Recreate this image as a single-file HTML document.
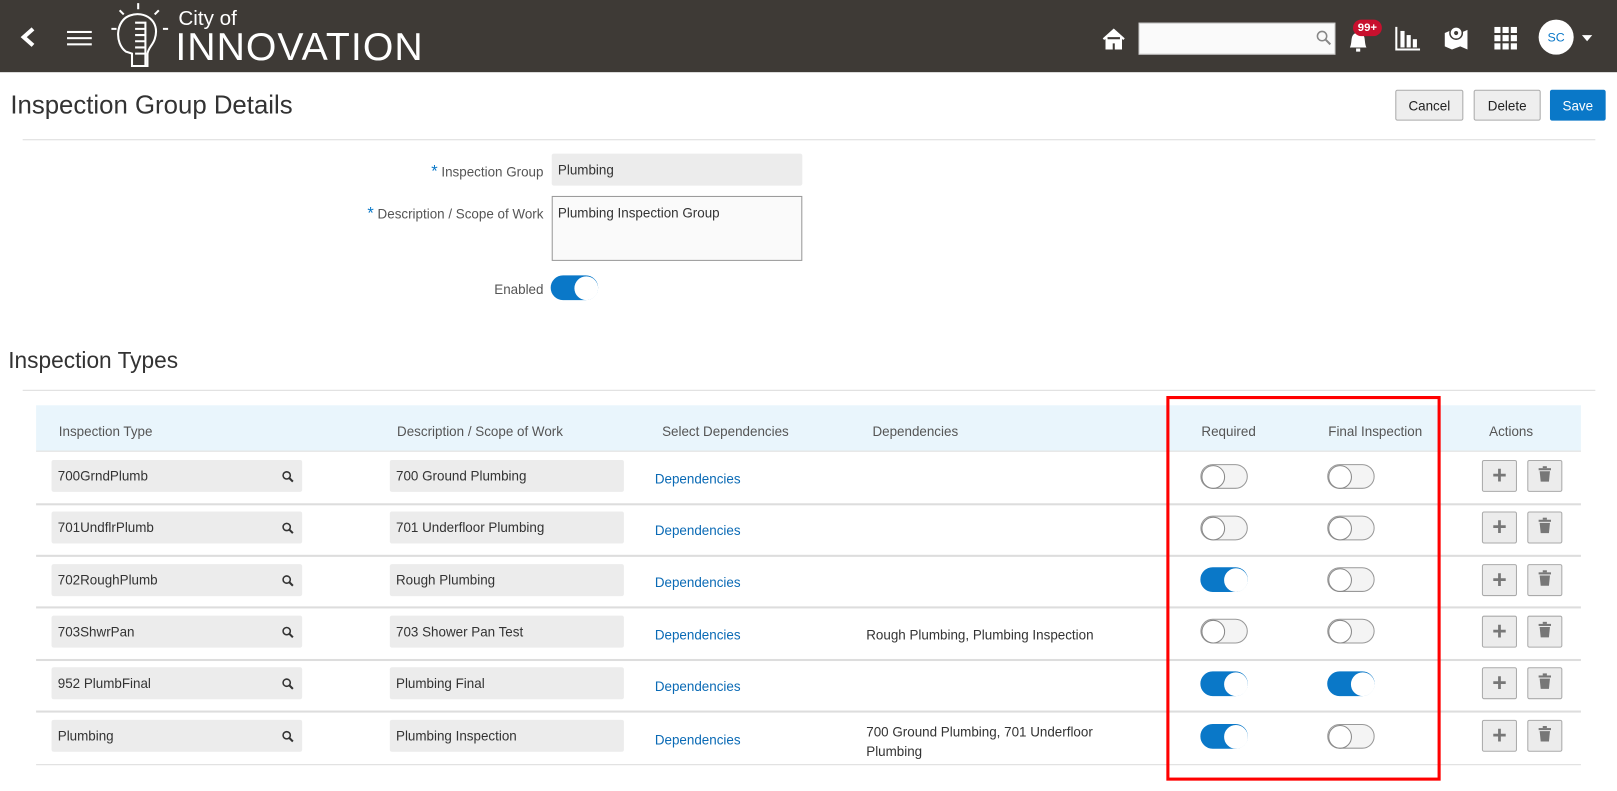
<!DOCTYPE html>
<html><head><meta charset="utf-8"><style>
*{box-sizing:border-box;margin:0;padding:0}
html,body{width:1617px;height:791px;overflow:hidden;background:#fff}
#w{position:absolute;left:0;top:0;width:1568px;height:767px;transform:scale(1.03125);transform-origin:0 0;font-family:"Liberation Sans",sans-serif;color:#333;font-size:13px}
.abs{position:absolute}
.hdr{left:0;top:0;width:1568px;height:70px;background:#3e3a36}
.btn{position:absolute;top:87px;height:30px;border:1px solid #aaa;background:#eee;border-radius:2px;font-size:13px;display:flex;align-items:center;justify-content:center;color:#222}
.inp{position:absolute;background:#ececec;border-radius:2px;font-size:13px;color:#333;padding-left:6px;display:flex;align-items:center}
.tog{position:absolute;width:46px;height:24px;border-radius:12px;border:1px solid #999;background:#f4f4f4}
.tog::after{content:"";position:absolute;left:0;top:0;width:21px;height:21px;border-radius:50%;background:#fff;border:1px solid #888}
.tog.on{background:#0a78c8;border-color:#0a78c8}
.tog.on::after{left:22px;border-color:#fff}
.line{position:absolute;height:1px;background:#ddd}
.lnk{position:absolute;color:#0a6ab5;font-size:13px}
.ab{position:absolute;width:34px;height:31px;border:1px solid #aaa;background:#ececec;border-radius:2px;color:#777;font-size:24px;font-weight:bold;display:flex;align-items:center;justify-content:center}
.th{position:absolute;top:411px;font-size:13px;color:#555}
</style></head><body><div id="w">
<div class="abs hdr"></div>
<svg class="abs" style="left:18px;top:25px" width="20" height="22"><path d="M14 3 L5 11 L14 19" stroke="#fff" stroke-width="4" fill="none"/></svg>
<div class="abs" style="left:65px;top:30px;width:24px;height:2px;background:#fff;box-shadow:0 6px #fff,0 12px #fff"></div>
<svg class="abs" style="left:106px;top:2px" width="60" height="66" stroke="#fff" fill="none" stroke-width="2"><path d="M16 48 C5 40 6 18 20 13 C34 8 50 18 44 36 C42 42 38 44 37 50 L37 62 L22 62 L22 50 Z"/><path d="M25 20 h10 v42 M25 26h10M25 32h10M25 38h10M25 44h10M25 50h10"/><path d="M10 8 l4 4 M28 1 v6 M48 8 l-4 4 M2 26 h5 M52 26 h5"/></svg>
<div class="abs" style="left:173px;top:7px;color:#fff;font-size:20px">City of</div>
<div class="abs" style="left:170px;top:26px;color:#fff;font-size:38px;letter-spacing:1px;line-height:40px">INNOVATION</div>
<svg class="abs" style="left:1068px;top:27px" width="24" height="22"><path d="M2 11 L12 2 L22 11 M5 9 V20 H10 V14 H14 V20 H19 V9" fill="#fff" stroke="#fff" stroke-width="2"/></svg>
<div class="abs" style="left:1104px;top:22px;width:191px;height:31px;background:#fafafa;border:1px solid #ccc"></div>
<svg class="abs" style="left:1276px;top:29px" width="16" height="16"><circle cx="6" cy="6" r="4.5" stroke="#888" stroke-width="1.5" fill="none"/><path d="M9.5 9.5 L14 14" stroke="#888" stroke-width="2"/></svg>
<svg class="abs" style="left:1305px;top:28px" width="24" height="24"><path d="M4 18 C6 14 5 8 7 6 C9 3 15 3 17 6 C19 8 18 14 20 18 Z M10 19 h4 v3 h-4z" fill="#fff"/></svg>
<div class="abs" style="left:1312px;top:19px;width:28px;height:16px;background:#c8102e;border-radius:8px;color:#fff;font-size:11px;font-weight:bold;text-align:center;line-height:16px">99+</div>
<svg class="abs" style="left:1352px;top:24px" width="26" height="26"><path d="M2 2 V24 H25" stroke="#fff" stroke-width="2" fill="none"/><rect x="6" y="6" width="4" height="16" fill="#fff"/><rect x="12" y="10" width="4" height="12" fill="#fff"/><rect x="18" y="14" width="4" height="8" fill="#fff"/></svg>
<svg class="abs" style="left:1400px;top:24px" width="24" height="26"><path d="M1 8 L8 5 L16 8 L23 5 V24 L16 21 L8 24 L1 21 Z" fill="#fff"/><circle cx="12" cy="8" r="6" fill="#fff" stroke="#3e3a36" stroke-width="1.5"/><circle cx="12" cy="8" r="2" fill="#3e3a36"/></svg>
<svg class="abs" style="left:1449px;top:26px" width="22" height="22" fill="#fff"><rect x="0" y="0" width="6" height="6"/><rect x="8" y="0" width="6" height="6"/><rect x="16" y="0" width="6" height="6"/><rect x="0" y="8" width="6" height="6"/><rect x="8" y="8" width="6" height="6"/><rect x="16" y="8" width="6" height="6"/><rect x="0" y="16" width="6" height="6"/><rect x="8" y="16" width="6" height="6"/><rect x="16" y="16" width="6" height="6"/></svg>
<div class="abs" style="left:1492px;top:19px;width:34px;height:34px;border-radius:50%;background:#fff;color:#0a78c8;font-size:12px;text-align:center;line-height:34px">SC</div>
<div class="abs" style="left:1534px;top:34px;border-left:5px solid transparent;border-right:5px solid transparent;border-top:6px solid #fff"></div>

<div class="abs" style="left:10px;top:88px;font-size:25px;color:#333">Inspection Group Details</div>
<div class="btn" style="left:1353px;width:66px">Cancel</div>
<div class="btn" style="left:1429px;width:65px">Delete</div>
<div class="btn" style="left:1503px;width:54px;background:#0a78c8;border-color:#0a78c8;color:#fff">Save</div>
<div class="line" style="left:22px;top:135px;width:1525px"></div>

<div class="abs" style="left:300px;top:158px;width:227px;text-align:right;font-size:13px;color:#555"><span style="color:#0a78c8;font-size:16px">*</span> Inspection Group</div>
<div class="inp" style="left:535px;top:149px;width:243px;height:31px">Plumbing</div>
<div class="abs" style="left:300px;top:199px;width:227px;text-align:right;font-size:13px;color:#555"><span style="color:#0a78c8;font-size:16px">*</span> Description / Scope of Work</div>
<div class="abs" style="left:535px;top:190px;width:243px;height:63px;border:1px solid #999;background:#fafafa;padding:8px 5px;font-size:13px">Plumbing Inspection Group</div>
<div class="abs" style="left:300px;top:273px;width:227px;text-align:right;font-size:13px;color:#555">Enabled</div>
<div class="tog on" style="left:534px;top:267px"></div>

<div class="abs" style="left:8px;top:337px;font-size:22px;color:#333">Inspection Types</div>
<div class="line" style="left:22px;top:378px;width:1525px"></div>

<div class="abs" style="left:35px;top:393px;width:1498px;height:44px;background:#e9f5fc"></div>
<div class="th" style="left:57px">Inspection Type</div>
<div class="th" style="left:385px">Description / Scope of Work</div>
<div class="th" style="left:642px">Select Dependencies</div>
<div class="th" style="left:846px">Dependencies</div>
<div class="th" style="left:1165px">Required</div>
<div class="th" style="left:1288px">Final Inspection</div>
<div class="th" style="left:1444px">Actions</div>

<div class="line" style="left:35px;top:437px;width:1498px"></div>
<div class="line" style="left:35px;top:488px;width:1498px;height:2px"></div>
<div class="line" style="left:35px;top:538px;width:1498px;height:2px"></div>
<div class="line" style="left:35px;top:588px;width:1498px;height:2px"></div>
<div class="line" style="left:35px;top:639px;width:1498px;height:2px"></div>
<div class="line" style="left:35px;top:689px;width:1498px;height:2px"></div>
<div class="line" style="left:35px;top:741px;width:1498px"></div>

<div class="inp" style="left:50px;top:446px;width:243px;height:31px">700GrndPlumb</div>
<div class="inp" style="left:378px;top:446px;width:227px;height:31px">700 Ground Plumbing</div>
<div class="lnk" style="left:635px;top:457px">Dependencies</div>
<div class="tog" style="left:1164px;top:450px"></div><div class="tog" style="left:1287px;top:450px"></div>

<div class="inp" style="left:50px;top:496px;width:243px;height:31px">701UndflrPlumb</div>
<div class="inp" style="left:378px;top:496px;width:227px;height:31px">701 Underfloor Plumbing</div>
<div class="lnk" style="left:635px;top:507px">Dependencies</div>
<div class="tog" style="left:1164px;top:500px"></div><div class="tog" style="left:1287px;top:500px"></div>

<div class="inp" style="left:50px;top:547px;width:243px;height:31px">702RoughPlumb</div>
<div class="inp" style="left:378px;top:547px;width:227px;height:31px">Rough Plumbing</div>
<div class="lnk" style="left:635px;top:557px">Dependencies</div>
<div class="tog on" style="left:1164px;top:550px"></div><div class="tog" style="left:1287px;top:550px"></div>

<div class="inp" style="left:50px;top:597px;width:243px;height:31px">703ShwrPan</div>
<div class="inp" style="left:378px;top:597px;width:227px;height:31px">703 Shower Pan Test</div>
<div class="lnk" style="left:635px;top:608px">Dependencies</div>
<div class="abs" style="left:840px;top:608px">Rough Plumbing, Plumbing Inspection</div>
<div class="tog" style="left:1164px;top:600px"></div><div class="tog" style="left:1287px;top:600px"></div>

<div class="inp" style="left:50px;top:647px;width:243px;height:31px">952 PlumbFinal</div>
<div class="inp" style="left:378px;top:647px;width:227px;height:31px">Plumbing Final</div>
<div class="lnk" style="left:635px;top:658px">Dependencies</div>
<div class="tog on" style="left:1164px;top:651px"></div><div class="tog on" style="left:1287px;top:651px"></div>

<div class="inp" style="left:50px;top:698px;width:243px;height:31px">Plumbing</div>
<div class="inp" style="left:378px;top:698px;width:227px;height:31px">Plumbing Inspection</div>
<div class="lnk" style="left:635px;top:710px">Dependencies</div>
<div class="abs" style="left:840px;top:700px;line-height:19px">700 Ground Plumbing, 701 Underfloor<br>Plumbing</div>
<div class="tog on" style="left:1164px;top:702px"></div><div class="tog" style="left:1287px;top:702px"></div>

<svg class="abs" style="left:272px;top:455px" width="16" height="270"><g stroke="#333" fill="none"><g id="m"><circle cx="6" cy="6" r="3.5" stroke-width="1.5"/><path d="M8.5 8.5 L12 12" stroke-width="2"/></g><use href="#m" y="50"/><use href="#m" y="101"/><use href="#m" y="151"/><use href="#m" y="201"/><use href="#m" y="252"/></g></svg>

<div class="ab" style="left:1437px;top:446px">+</div><div class="ab" style="left:1481px;top:446px"></div>
<div class="ab" style="left:1437px;top:496px">+</div><div class="ab" style="left:1481px;top:496px"></div>
<div class="ab" style="left:1437px;top:547px">+</div><div class="ab" style="left:1481px;top:547px"></div>
<div class="ab" style="left:1437px;top:597px">+</div><div class="ab" style="left:1481px;top:597px"></div>
<div class="ab" style="left:1437px;top:647px">+</div><div class="ab" style="left:1481px;top:647px"></div>
<div class="ab" style="left:1437px;top:698px">+</div><div class="ab" style="left:1481px;top:698px"></div>
<svg class="abs" style="left:1491px;top:452px" width="14" height="270" fill="#777"><g id="t"><rect x="1" y="2" width="12" height="2"/><rect x="5" y="0" width="4" height="2"/><path d="M2 5 H12 L11 15 H3 Z"/></g><use href="#t" y="50"/><use href="#t" y="101"/><use href="#t" y="151"/><use href="#t" y="201"/><use href="#t" y="252"/></svg>

<div class="abs" style="left:1131px;top:384px;width:266px;height:373px;border:3px solid #f00"></div>
</div></body></html>
